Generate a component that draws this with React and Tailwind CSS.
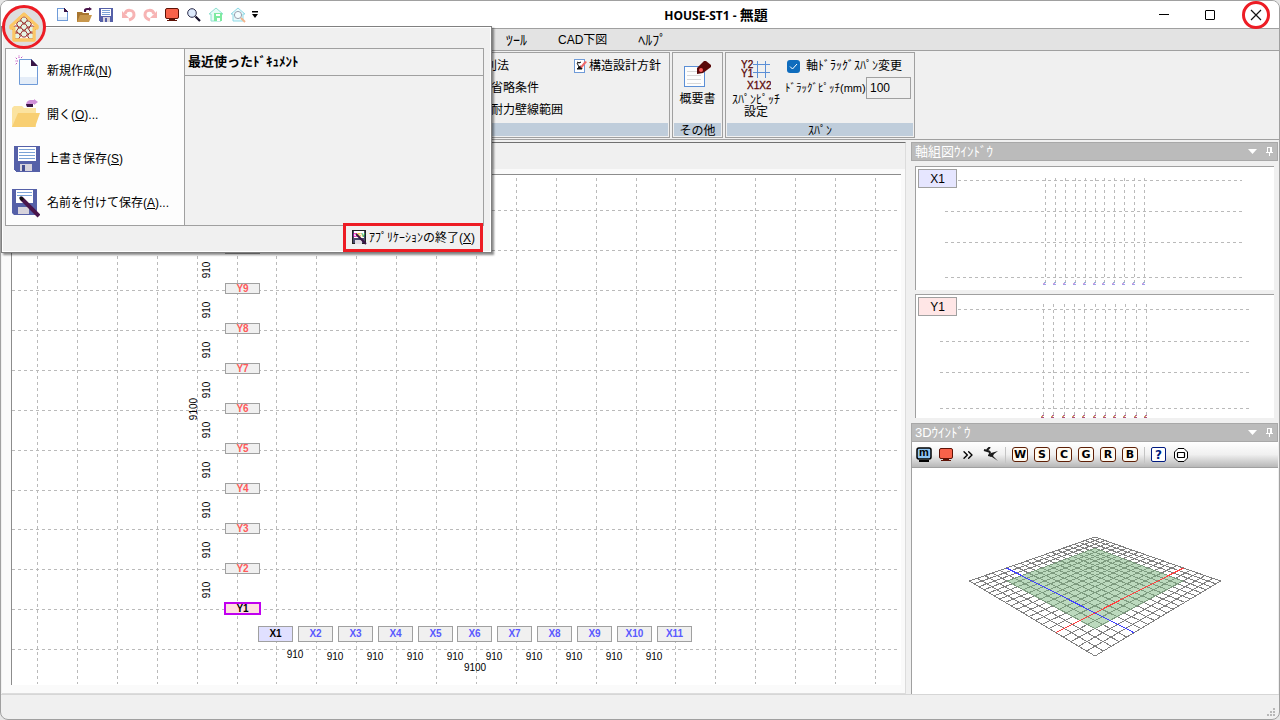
import { ChevronsRight } from 'lucide-react'

const PITCH = 40

const yAxes = Array.from({ length: 10 }, (_, i) => ({ name: `Y${i + 1}`, top: 428 - i * PITCH }))
const xAxes = Array.from({ length: 11 }, (_, i) => ({ name: `X${i + 1}`, left: 246 + i * PITCH - (i > 4 ? 1 : 0) }))
const gridCols = Array.from({ length: 22 }, (_, i) => 25 + i * PITCH - (i > 5 ? 1 : 0) - (i > 15 ? 1 : 0))
const gridRows = Array.from({ length: 12 }, (_, i) => 35 + i * PITCH - (i > 7 ? 1 : 0))

/* small toolbar icons */
function NewIcon() {
  return (
    <svg width="13" height="15" viewBox="0 0 13 15" shapeRendering="crispEdges">
      <path d="M1.5 1.5h7l3 3v9h-10z" fill="#fbfdff" stroke="#6f9bd8" />
      <rect x="2" y="10" width="9" height="3" fill="#e2ecf8" />
      <path d="M8 1v4h4z" fill="#3a1546" />
    </svg>
  )
}

function OpenIcon() {
  return (
    <svg width="16" height="16" viewBox="0 0 16 16">
      <path d="M1 5h5l1 1h6v9H1z" fill="#a8752f" />
      <path d="M4 8h12l-3 7H1z" fill="#c8974c" />
      <path d="M8 5V3c0-1 1-2 3-2h2v-1l3 2-3 2V3h-2c-1 0-1 1-1 2z" fill="#4a154b" />
    </svg>
  )
}

function SaveIcon() {
  return (
    <svg width="14" height="14" viewBox="0 0 14 14" shapeRendering="crispEdges">
      <path d="M0 0h14v14H1l-1-1z" fill="#5560a8" />
      <rect x="2" y="1" width="10" height="7" fill="#fff" />
      <path d="M3 2.5h8M3 4.5h8M3 6.5h8" stroke="#7ba3d6" />
      <rect x="4" y="9" width="7" height="5" fill="#d7d3dc" />
      <rect x="6" y="10" width="2" height="4" fill="#5560a8" />
    </svg>
  )
}

function UndoIcon({ flip }) {
  return (
    <svg width="15" height="15" viewBox="0 0 15 15" className={flip ? '-scale-x-100' : ''}>
      <path d="M4 7c1-5 9-5 9 1 0 2-2 4-5 5" fill="none" stroke="#f7b4b4" strokeWidth="3" />
      <path d="M1 4v7h7z" fill="#f7b4b4" />
    </svg>
  )
}

function MonitorIcon() {
  return (
    <svg width="16" height="15" viewBox="0 0 16 15">
      <rect x="1.5" y="1.5" width="13" height="10" rx="1.5" fill="#f8624a" stroke="#5e1206" />
      <path d="M5 12.5h6M3 13.5h10" stroke="#5e1206" />
    </svg>
  )
}

function SearchIcon() {
  return (
    <svg width="14" height="14" viewBox="0 0 14 14">
      <circle cx="5" cy="5" r="4.3" fill="#dce9fb" stroke="#2b2b4a" />
      <path d="M8.5 8.5l4.5 4.5" stroke="#15102a" strokeWidth="2.2" />
    </svg>
  )
}

function HouseSaveIcon() {
  return (
    <svg width="16" height="15" viewBox="0 0 16 15">
      <path d="M8 1l7 6h-2v7H3V7H1z" fill="#e8fbf7" stroke="#8ee0d0" />
      <rect x="6" y="6" width="8" height="8" fill="#7eeaa0" />
      <rect x="8" y="7" width="4" height="2" fill="#fff" />
      <rect x="9" y="11" width="3" height="3" fill="#fff" />
    </svg>
  )
}

function HouseSearchIcon() {
  return (
    <svg width="16" height="16" viewBox="0 0 16 16">
      <path d="M8 1l7 6h-2v7H3V7H1z" fill="#e8fbfd" stroke="#8fd9e6" />
      <circle cx="8" cy="8" r="3.6" fill="#f4fdff" stroke="#9aa0ae" />
      <path d="M11 11l4 4" stroke="#f2b48c" strokeWidth="2" />
    </svg>
  )
}

const quickTools = [
  { label: '新規', Icon: NewIcon },
  { label: '開く', Icon: OpenIcon },
  { label: '保存', Icon: SaveIcon },
  { label: '元に戻す', Icon: UndoIcon },
  { label: 'やり直し', Icon: () => <UndoIcon flip /> },
  { label: '画面', Icon: MonitorIcon },
  { label: '検索', Icon: SearchIcon },
  { label: '建物保存', Icon: HouseSaveIcon },
  { label: '建物検索', Icon: HouseSearchIcon },
]

/* application button */
function HouseLogo() {
  const cells = [[23, 16], [19, 20], [27, 20], [23, 23], [15, 25], [19, 27], [27, 27], [31, 25], [23, 30], [16, 32], [30, 32]]
  return (
    <svg width="46" height="46" viewBox="0 0 46 46">
      <circle cx="23" cy="23" r="20.5" fill="#dedede" stroke="#ed1c24" strokeWidth="3" />
      <path d="M23 10L10 22v2h3v12h20V24h3v-2z" fill="#fffdf5" stroke="#fbc766" strokeWidth="3" strokeLinejoin="round" />
      <g fill="#e4f5e4" stroke="#9c2f2f">
        {cells.map(([x, y]) => (
          <path key={`${x}-${y}`} d={`M${x - 1.5} ${y - 3}h3l2 3-2 3h-3l-2-3z`} />
        ))}
      </g>
      <path d="M23 10L10 22v2h3v12h20V24h3v-2z" fill="none" stroke="#fbc766" strokeWidth="3" strokeLinejoin="round" />
    </svg>
  )
}

/* large menu icons */
function BigNewIcon() {
  return (
    <svg width="28" height="32" viewBox="0 0 28 32">
      <path d="M7.5 4.5h12l6 7v18h-18z" fill="#fbfeff" stroke="#6f9bd8" />
      <rect x="8" y="22" width="17" height="7" fill="#e4edf8" />
      <path d="M19 4v7h7z" fill="#3a1546" />
      <path d="M6 6H3M5 4L3 2M7 3V0M9 3l2-2M5 8l-2 2" stroke="#c050c0" strokeDasharray="1.5 1" />
    </svg>
  )
}

function BigOpenIcon() {
  return (
    <svg width="28" height="32" viewBox="0 0 28 32">
      <path d="M0 9l2-2h8l2 2h12v19H0z" fill="#fbe3a0" />
      <path d="M6 14h22l-5 14H0z" fill="#f8cf72" />
      <path d="M14 7c0-4 2-6 5-6h3V0l4 3-4 3V5h-3c-2 0-2 1-2 3z" fill="#cf90d8" />
      <path d="M14 5h7v3h-6z" fill="#3a1546" />
    </svg>
  )
}

function BigSaveIcon() {
  return (
    <svg width="28" height="28" viewBox="0 0 28 28" shapeRendering="crispEdges">
      <path d="M2 1h26v26H4l-2-2z" fill="#5560a8" />
      <rect x="6" y="2" width="18" height="14" fill="#fff" />
      <path d="M7 4.5h16M7 7.5h16M7 10.5h16M7 13.5h16" stroke="#7ba3d6" />
      <rect x="8" y="19" width="12" height="7" fill="#d7d3dc" />
      <rect x="10" y="20" width="3" height="6" fill="#454e90" />
    </svg>
  )
}

function BigSaveAsIcon() {
  return (
    <svg width="28" height="30" viewBox="0 0 28 30">
      <path d="M0 1h25v26H2l-2-2z" fill="#5560a8" />
      <rect x="4" y="2" width="17" height="13" fill="#fff" />
      <path d="M5 4.5h15M5 7.5h15" stroke="#7ba3d6" />
      <rect x="6" y="19" width="11" height="7" fill="#d7d3dc" />
      <path d="M9 10l18 18" stroke="#4a154b" strokeWidth="4" />
      <path d="M8 9l3 3" stroke="#111" strokeWidth="3" />
    </svg>
  )
}

function CsvIcon() {
  return (
    <svg width="15" height="15" viewBox="0 0 15 15">
      <rect x="0.5" y="0.5" width="13" height="13" fill="#4a4a6a" stroke="#222" />
      <rect x="2" y="1" width="10" height="7" fill="#fff" />
      <text x="1" y="7" fontSize="6" fontWeight="700" fontFamily="Liberation Sans">
        <tspan fill="#f0a">C</tspan><tspan fill="#e8b800">S</tspan><tspan fill="#2a4">V</tspan>
      </text>
      <rect x="3" y="10" width="7" height="4" fill="#e0dce4" />
      <path d="M4 4l10 10" stroke="#3a1546" strokeWidth="2" />
    </svg>
  )
}

const fileItems = [
  { text: '新規作成', mnemonic: 'N', Icon: BigNewIcon },
  { text: '開く', mnemonic: 'O', dots: true, Icon: BigOpenIcon },
  { text: '上書き保存', mnemonic: 'S', Icon: BigSaveIcon },
  { text: '名前を付けて保存', mnemonic: 'A', dots: true, Icon: BigSaveAsIcon },
]

function AppMenu() {
  return (
    <div className="absolute left-0 top-[25px] w-[491px] border border-[#808080] bg-[#f0f0f0] pl-[3px] pr-[7px] pt-[21px] shadow-[inset_0_0_0_1px_#fff,2px_2px_2px_rgba(0,0,0,0.45)]">
      <div className="flex h-[178px] border border-[#a0a0a0]">
        <ul className="w-[179px] border-r border-[#a0a0a0] bg-[#fdfdfd]">
          {fileItems.map(({ text, mnemonic, dots, Icon }) => (
            <li key={text}>
              <button className="flex h-11 w-full items-center gap-[7px] whitespace-nowrap pl-1.5 text-left">
                <span className="flex w-7 justify-center"><Icon /></span>
                <span>{text}(<u>{mnemonic}</u>){dots && '...'}</span>
              </button>
            </li>
          ))}
        </ul>
        <div className="flex-1 bg-[#f1f1f1]">
          <h2 className="flex h-[27px] items-center border-b border-[#a0a0a0] pl-[3px] text-[13px] font-bold">
            最近使ったﾄﾞｷｭﾒﾝﾄ
          </h2>
        </div>
      </div>
      <div className="-mt-[3px] flex justify-end pr-px">
        <button className="flex h-[29px] w-[140px] items-center gap-0.5 whitespace-nowrap border-3 border-[#ed1c24] bg-[#f0f0f0] pl-1.5">
          <CsvIcon />
          <span>ｱﾌﾟﾘｹｰｼｮﾝの終了(<u>X</u>)</span>
        </button>
      </div>
    </div>
  )
}

function TitleBar() {
  return (
    <header className="flex h-7 shrink-0 items-center border-b border-[#a0a0a0] bg-white pl-[50px]">
      <div className="flex items-center">
        {quickTools.map(({ label, Icon }) => (
          <button key={label} aria-label={label} className="flex h-6 w-[22px] items-center justify-center">
            <Icon />
          </button>
        ))}
        <button aria-label="ツールバーの設定" className="flex h-6 w-3 items-center justify-center">
          <svg width="6" height="7" viewBox="0 0 6 7">
            <path d="M0 0h6v1.500H0zM0 3h6L3 7z" fill="#000" />
          </svg>
        </button>
      </div>
      <h1 className="flex-1 whitespace-nowrap pl-[30px] text-center font-['Open_Sans','Noto_Sans_CJK_JP',sans-serif] text-xs font-bold">
        HOUSE-ST1 - <span className="text-sm">無題</span>
      </h1>
      <div className="flex">
        <button aria-label="最小化" className="flex h-7 w-[46px] items-center justify-center">
          <span className="h-px w-2.5 bg-black" />
        </button>
        <button aria-label="最大化" className="flex h-7 w-[46px] items-center justify-center">
          <span className="h-2.5 w-2.5 rounded-[1px] border border-black" />
        </button>
        <button aria-label="閉じる" className="flex h-7 w-[46px] items-center justify-center">
          <svg width="28" height="28" viewBox="0 0 28 28" fill="none">
            <circle cx="14" cy="14" r="12.500" stroke="#ed1c24" strokeWidth="3" />
            <path d="M9 9l10 10M19 9L9 19" stroke="#111" strokeWidth="1.200" />
          </svg>
        </button>
      </div>
    </header>
  )
}

function RibbonGroup({ title, className, children }) {
  return (
    <section className={`flex shrink-0 flex-col border border-[#a0a0a0] p-px pt-0.5 ${className}`}>
      <div className="flex-1">{children}</div>
      <h3 className="h-[13px] bg-[#bfcddb] text-center leading-4">{title}</h3>
    </section>
  )
}

function ReportIcon() {
  return (
    <svg width="28" height="28" viewBox="0 0 28 28">
      <rect x="0.500" y="6.500" width="20" height="20" fill="#fdfdfd" stroke="#5b8fd6" />
      <path d="M3 11.500h14M3 15.500h14M3 19.500h14M3 23.500h14" stroke="#d8d8d8" />
      <path d="M13 8l7-7h2l5 4v2l-8 6-6 1z" fill="#5a0a0a" />
      <circle cx="17" cy="10" r="2" fill="#ff5a5a" />
    </svg>
  )
}

function SpanIcon() {
  return (
    <svg width="30" height="30" viewBox="0 0 30 30">
      <path d="M12 4.500h17M12 12.500h17M16.500 1v17M24.500 1v17" stroke="#5b8fd6" />
      <g fill="#5a0a0a" stroke="#5a0a0a" strokeWidth="0.3" fontFamily="Liberation Sans" fontSize="10">
        <text x="0" y="8">Y2</text>
        <text x="0" y="17">Y1</text>
        <text x="6" y="29">X1X2</text>
      </g>
    </svg>
  )
}

function PolicyIcon() {
  return (
    <svg width="13" height="14" viewBox="0 0 13 14">
      <rect x="0.500" y="0.500" width="10" height="13" fill="#fff" stroke="#6f9bd8" />
      <path d="M3 3l2 1 2-1M3 4l2 4M3 10h5l-1-3-2 1z" fill="#111" stroke="#111" />
      <path d="M6 8l5-6 2 1-5 6z" fill="#f06a6a" />
    </svg>
  )
}

function Ribbon() {
  return (
    <div className="flex h-[89px] shrink-0 gap-0.5 border-b border-[#a0a0a0] pb-px pl-px pt-px">
      <RibbonGroup title="" className="w-[668px]">
        <div className="grid grid-cols-[83px_1fr] pl-[487px]">
          <button className="-ml-[18px] h-[22px] whitespace-nowrap text-left">判別法</button>
          <button className="flex h-[22px] items-center gap-0.5 whitespace-nowrap"><PolicyIcon />構造設計方針</button>
          <button className="col-span-2 h-[22px] text-left">省略条件</button>
          <button className="col-span-2 h-[22px] text-left">耐力壁線範囲</button>
        </div>
      </RibbonGroup>

      <RibbonGroup title="その他" className="w-[51px]">
        <button className="flex w-full flex-col items-center gap-[5px] pt-[5px] leading-3">
          <ReportIcon />
          概要書
        </button>
      </RibbonGroup>

      <RibbonGroup title="ｽﾊﾟﾝ" className="w-[190px]">
        <div className="flex items-start gap-1 pl-1">
          <button className="flex w-[50px] shrink-0 flex-col items-center gap-1 pt-[5px] leading-3">
            <SpanIcon />
            <span>ｽﾊﾟﾝﾋﾟｯﾁ<br />設定</span>
          </button>
          <div className="flex-1">
            <label className="relative flex h-[22px] items-center gap-1.5 whitespace-nowrap pl-0.5">
              <input
                type="checkbox"
                defaultChecked
                className="h-[13px] w-[13px] appearance-none rounded-[3px] bg-[#0f6cbd]"
              />
              <svg width="9" height="7" viewBox="0 0 9 7" className="pointer-events-none absolute left-1">
                <path d="M1 3.500l2.500 2.500L8 1" fill="none" stroke="#fff" />
              </svg>
              軸ﾄﾞﾗｯｸﾞｽﾊﾟﾝ変更
            </label>
            <div className="flex items-center">
              <label htmlFor="pitch" className="w-[81px] whitespace-nowrap text-[11px]">ﾄﾞﾗｯｸﾞﾋﾟｯﾁ(mm)</label>
              <input
                id="pitch"
                defaultValue="100"
                className="h-[22px] w-[45px] border border-[#a0a0a0] bg-[#f0f0f0] pl-[3px]"
              />
            </div>
          </div>
        </div>
      </RibbonGroup>
    </div>
  )
}

/* plan drawing: axis grid, axis buttons and span sizes */
function PlanCanvas() {
  return (
    <div className="relative flex-1 overflow-hidden border-l border-t border-[#8c8c8c] bg-white font-['Liberation_Sans',sans-serif]">
      <svg width="887" height="510" className="absolute left-0 top-0" shapeRendering="crispEdges">
        <g stroke="#bababa" strokeDasharray="3 3">
          {gridCols.map((x) => <path key={x} d={`M${x + 0.5} 3V509`} />)}
          {gridRows.map((y) => <path key={y} d={`M0 ${y + 0.5}H887`} />)}
        </g>
      </svg>

      {yAxes.map(({ name, top }, i) => (
        <button
          key={name}
          className={
            i === 0
              ? 'absolute left-[212px] flex h-[13px] w-[37px] items-center justify-center border-2 border-[#c000f0] bg-[#ffe0e0] text-[10px] font-bold'
              : 'absolute left-[213px] flex h-[11px] w-[35px] items-center justify-center border border-[#a0a0a0] bg-[#f0f0f0] text-[10px] font-bold text-[#ff5a5a]'
          }
          style={{ top: i === 0 ? top - 1 : top }}
        >
          {name}
        </button>
      ))}
      {yAxes.slice(1).map(({ name, top }) => (
        <span
          key={name}
          className="absolute left-[195px] -translate-x-1/2 -translate-y-1/2 rotate-180 text-[10px] leading-3 [writing-mode:vertical-rl]"
          style={{ top: top + 27 }}
        >
          910
        </span>
      ))}
      <span className="absolute left-[182px] top-[234px] -translate-x-1/2 -translate-y-1/2 rotate-180 text-[10px] leading-3 [writing-mode:vertical-rl]">
        9100
      </span>

      {xAxes.map(({ name, left }, i) => (
        <button
          key={name}
          className={`absolute top-[451px] flex h-4 w-[35px] items-center justify-center border border-[#a0a0a0] text-[10px] font-bold ${
            i === 0 ? 'bg-[#e0e0ff]' : 'bg-[#f0f0f0] text-[#5a5aff]'
          }`}
          style={{ left }}
        >
          {name}
        </button>
      ))}
      {xAxes.slice(0, 10).map(({ name, left }, i) => (
        <span
          key={name}
          className="absolute -translate-x-1/2 -translate-y-1/2 text-[10px] leading-3"
          style={{ left: left + 37, top: i === 0 ? 480 : 482 }}
        >
          910
        </span>
      ))}
      <span className="absolute left-[463px] top-[493px] -translate-x-1/2 -translate-y-1/2 text-[10px] leading-3">9100</span>
    </div>
  )
}

function PanelHeader({ title }) {
  return (
    <div className="flex h-[19px] shrink-0 items-center border border-[#a8a8a8] bg-[#bbb] pl-[3px] pr-[3px] text-[13px] text-white">
      <h2 className="flex-1">{title}</h2>
      <button aria-label="メニュー" className="mr-2">
        <svg width="9" height="5" viewBox="0 0 9 5"><path d="M0 0h9L4.500 5z" fill="#fff" /></svg>
      </button>
      <button aria-label="固定">
        <svg width="9" height="9" viewBox="0 0 9 9" fill="none" stroke="#fff" shapeRendering="crispEdges">
          <path d="M2.500 0v5M6.500 0v5M2 0.500h5M5.500 0v5M1 5.500h7M4.500 6v3" />
        </svg>
      </button>
    </div>
  )
}

function FrameView({ axis, tint, cols, rows, left, right, top, bottom, marks }) {
  return (
    <div className="relative h-[124px] overflow-hidden border-l border-t border-[#a0a0a0] bg-white">
      <svg width="358" height="123" className="absolute left-0 top-0" shapeRendering="crispEdges">
        <g stroke="#bababa" strokeDasharray="3 3">
          {cols.map((x) => <path key={x} d={`M${x + 0.5} ${top}V${bottom}`} />)}
          {rows.map((y, i) => <path key={y} d={`M${i === 0 ? 42 : left} ${y + 0.5}H${right}`} />)}
        </g>
        {cols.map((x) => (
          <g key={x}>
            <rect x={x - 1} y={bottom} width="2" height="1" fill={marks[0]} />
            <rect x={x - 2} y={bottom + 1} width="2" height="1" fill={marks[1]} />
            <rect x={x - 2} y={bottom + 2} width="3" height="1" fill={marks[2]} />
          </g>
        ))}
      </svg>
      <button className={`absolute left-0.5 top-0.5 h-[19px] w-[39px] border border-[#a0a0a0] leading-4 ${tint}`}>{axis}</button>
    </div>
  )
}

/* perspective floor mesh */
const project = (u, v) => {
  const s = u + v
  const w = 1 + 0.352 * s
  return `${(183 + (169.7 * (u - v)) / w).toFixed(1)} ${((656 + 129.5 * s) / w - 468).toFixed(1)}`
}
const line = (u1, v1, u2, v2) => `M${project(u1, v1)}L${project(u2, v2)}`

function Mesh() {
  const steps = Array.from({ length: 21 }, (_, i) => i / 20)
  return (
    <svg width="366" height="210" viewBox="0 0 366 210" className="mx-auto" shapeRendering="crispEdges">
      <g stroke="#808080" fill="none">
        {steps.map((t) => <path key={t} d={line(t, 0, t, 1) + line(0, t, 1, t)} />)}
      </g>
      <path
        d={`M${project(0.145, 0.145)}L${project(0.855, 0.145)}L${project(0.855, 0.855)}L${project(0.145, 0.855)}z`}
        fill="#7ab67e"
        fillOpacity="0.5"
      />
      <path d={line(0, 0.25, 1, 0.25)} stroke="#ff4040" />
      <path d={line(0.25, 0, 0.25, 1)} stroke="#4040ff" />
    </svg>
  )
}

function ViewToolbar() {
  return (
    <div className="flex h-[25px] shrink-0 items-center border-l border-[#a0a0a0] bg-gradient-to-b from-white via-[#f0f0f0] to-[#b8b8b8] pl-1">
      <button aria-label="モデル" className="w-[22px]">
        <svg width="16" height="15" viewBox="0 0 16 15">
          <rect x="1" y="1" width="14" height="11" rx="2" fill="#8fc4f2" stroke="#000" strokeWidth="1.500" />
          <path d="M3 14h10" stroke="#000" strokeWidth="2" />
          <text x="8" y="9" textAnchor="middle" fontSize="11" fontWeight="700" fontFamily="Liberation Sans">m</text>
        </svg>
      </button>
      <button aria-label="画面" className="w-[22px]"><MonitorIcon /></button>
      <button aria-label="次へ" className="w-[23px]"><ChevronsRight size={16} strokeWidth={2} /></button>
      <button aria-label="鳥瞰" className="w-[22px]">
        <svg width="16" height="15" viewBox="0 0 16 15">
          <path d="M7 0L4 3M1 3l5 1.500 1.500 1.500M6 6.500L8.500 9" fill="none" stroke="#1a1a1a" strokeWidth="2" />
          <path d="M8 6l7-2-4 3-1 2 5 5-6-4-4-1V8z" fill="#1a1a1a" />
        </svg>
      </button>
      <span className="mr-1.5 h-4 w-px bg-[#c4c4c4]" />
      {['W', 'S', 'C', 'G', 'R', 'B'].map((c) => (
        <button
          key={c}
          className="mr-1.5 flex h-[15px] w-4 items-center justify-center rounded-[3px] border border-[#5e1f06] bg-[#fffaf0] font-['DejaVu_Sans',sans-serif] text-[11px] font-bold leading-3"
        >
          {c}
        </button>
      ))}
      <span className="mr-1.5 h-4 w-px bg-[#c4c4c4]" />
      <button className="mr-2 flex h-[15px] w-[15px] items-center justify-center rounded-[2px] border border-[#001a80] bg-white font-['DejaVu_Sans',sans-serif] text-xs font-bold leading-3 text-[#001a80]">
        ?
      </button>
      <button aria-label="表示">
        <svg width="14" height="14" viewBox="0 0 14 14" fill="none" stroke="#000">
          <path d="M4 0.500h6l3.500 3.500v6L10 13.500H4L0.500 10V4z" fill="#fff" />
          <rect x="3.500" y="4.500" width="7" height="5" rx="0.500" strokeWidth="1.200" />
        </svg>
      </button>
    </div>
  )
}

function Dock() {
  return (
    <aside className="flex w-[367px] shrink-0 flex-col">
      <PanelHeader title="軸組図ｳｲﾝﾄﾞｳ" />
      <div className="flex flex-col gap-1 pb-[5px] pl-1 pr-1 pt-[5px]">
        <FrameView
          axis="X1"
          tint="bg-[#e6e6ff]"
          cols={[129, 139, 149, 159, 169, 179, 188, 198, 208, 218, 228]}
          rows={[13, 44, 75, 110]}
          left={29}
          right={326}
          top={11}
          bottom={115}
          marks={['#8fb4d8', '#d8a0e0', '#a0a0e8']}
        />
        <FrameView
          axis="Y1"
          tint="bg-[#ffe6e6]"
          cols={[127, 137, 148, 158, 168, 179, 189, 199, 209, 220, 230]}
          rows={[14, 46, 77, 113]}
          left={24}
          right={333}
          top={9}
          bottom={120}
          marks={['#c06090', '#d0b060', '#b05080']}
        />
      </div>
      <PanelHeader title="3Dｳｲﾝﾄﾞｳ" />
      <ViewToolbar />
      <div className="flex-1 border-l border-t border-[#a0a0a0] bg-white">
        <Mesh />
      </div>
    </aside>
  )
}

export default function App() {
  return (
    <div className="bg-[#e6e6e6]">
      <div className="relative flex min-h-screen flex-col overflow-hidden rounded-lg border border-[#a0a0a0] bg-[#f0f0f0] font-['Liberation_Sans','Noto_Sans_CJK_JP',sans-serif] text-xs text-black">
        <TitleBar />
        <nav className="flex h-[22px] shrink-0 items-center gap-[31px] border-b border-[#a0a0a0] bg-[#e3e3e3] pl-[505px]">
          <a href="#tool" className="text-sm">ﾂｰﾙ</a>
          <a href="#cad">CAD下図</a>
          <a href="#help" className="text-sm">ﾍﾙﾌﾟ</a>
        </nav>
        <Ribbon />

        <main className="flex flex-1 gap-[5px] px-px pt-0.5">
          <div className="flex min-w-0 flex-1 flex-col border-b border-r border-t border-b-[#dcdcdc] border-r-[#dcdcdc] border-t-[#707070]">
            <div className="h-[26px] shrink-0" />
            <div className="flex flex-1 bg-[#fafafa] pb-2 pl-[9px] pr-1 pt-[5px]">
              <PlanCanvas />
            </div>
          </div>
          <Dock />
        </main>

        <footer className="flex h-[25px] shrink-0 items-end justify-end border-t border-[#d6d6d6] p-0.5">
          <svg width="10" height="10" viewBox="0 0 10 10" fill="#b8b8b8">
            <path d="M0 7h2v2H0zM3 7h2v2H3zM6 7h2v2H6zM3 4h2v2H3zM6 4h2v2H6zM6 1h2v2H6z" />
          </svg>
        </footer>

        <AppMenu />
        <button aria-label="アプリケーションメニュー" className="absolute left-0 top-[3px]">
          <HouseLogo />
        </button>
      </div>
    </div>
  )
}
